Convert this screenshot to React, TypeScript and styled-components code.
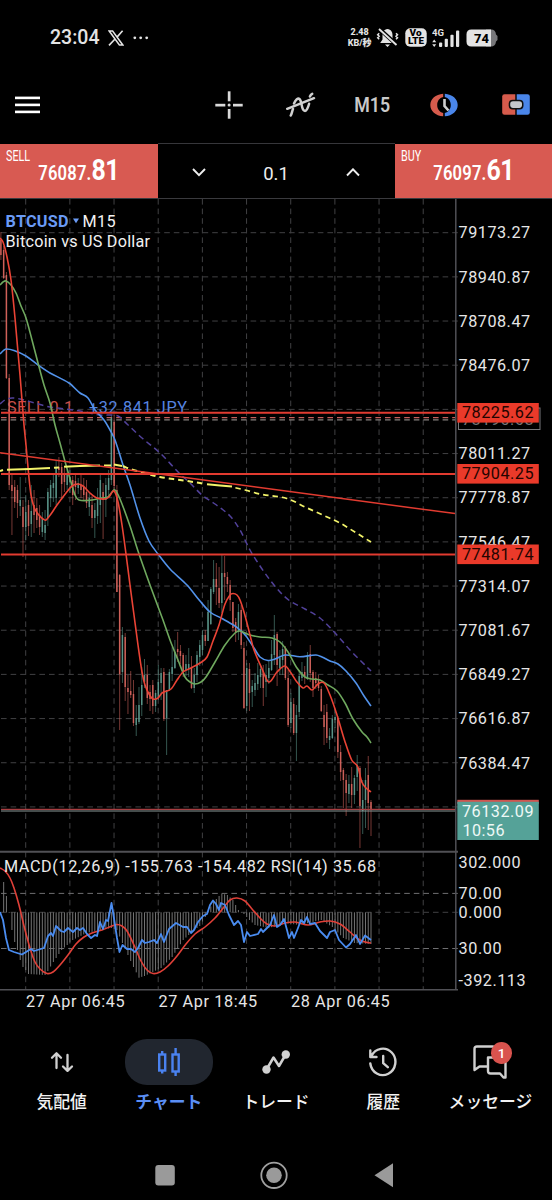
import React from 'react';
import styled, { createGlobalStyle } from 'styled-components';

const GlobalStyle = createGlobalStyle`
  * { box-sizing: border-box; }
  body { margin: 0; background: #000; }
`;

const Screen = styled.div`
  width: 552px;
  height: 1200px;
  display: flex;
  flex-direction: column;
  overflow: hidden;
  background: #000;
  color: #eee;
  font-family: Roboto, 'Noto Sans CJK JP', sans-serif;
`;

/* ---------- status bar ---------- */

const StatusBar = styled.header`
  height: 75px;
  padding: 0 53px 0 50px;
  display: flex;
  align-items: center;
  justify-content: space-between;
  color: #e4e4e4;
`;

const StatusGroup = styled.div<{ $gap: number }>`
  display: flex;
  align-items: center;
  gap: ${(p) => p.$gap}px;
`;

const Clock = styled.span`
  font-size: 19.5px;
  font-weight: 500;
  line-height: 22px;
`;

const NetSpeed = styled.div`
  width: 24px;
  margin-right: -1px;
  font-size: 9px;
  font-weight: 800;
  line-height: 11px;
  text-align: center;
  white-space: nowrap;
  display: flex;
  flex-direction: column;
  align-items: center;
`;

/* ---------- toolbar ---------- */

const Toolbar = styled.div`
  height: 68px;
  padding: 0 22px 9px 15px;
  display: flex;
  align-items: center;
  justify-content: space-between;
`;

const ToolGroup = styled.div`
  display: grid;
  grid-template-columns: repeat(5, 71.8px);
  width: 359px;
  margin-right: -22px;
  justify-items: center;
  align-items: center;
`;

const Timeframe = styled.span`
  font-size: 20px;
  font-weight: 600;
  line-height: 24px;
  color: #c9c9c9;
  transform: scaleX(0.89);
`;

/* ---------- one-click trading ---------- */

const TradePanel = styled.div`
  height: 56px;
  display: grid;
  grid-template-columns: 157.5px 1fr 157.5px;
  border-bottom: 1px solid #3a3a3e;
`;

const DealButton = styled.div`
  position: relative;
  margin-top: 1px;
  background: #d85a52;
  color: #fff;
  display: flex;
  justify-content: center;
  align-items: flex-end;
  padding-bottom: 13px;
`;

const DealSide = styled.span`
  position: absolute;
  left: 6px;
  top: 5px;
  font-size: 14px;
  line-height: 15px;
  transform: scaleX(0.77);
  transform-origin: left;
`;

const DealPrice = styled.span`
  display: flex;
  align-items: baseline;
  font-size: 20px;
  font-weight: 600;
  line-height: 30px;
  height: 30px;
  transform: scaleX(0.83);
  letter-spacing: 0.2px;
  white-space: nowrap;
  b {
    font-size: 30px;
    font-weight: 700;
    letter-spacing: -0.5px;
  }
`;

const Volume = styled.div`
  border-top: 1px solid #36363a;
  display: grid;
  grid-template-columns: 1fr 70px 1fr;
  align-items: center;
  justify-items: center;
  padding-top: 3px;
  font-size: 18.5px;
`;

const VolumeValue = styled.span`
  padding-top: 2px;
`;

/* ---------- chart ---------- */

const Chart = styled.svg`
  display: block;
  flex: none;
  text {
    font-family: Roboto, sans-serif;
    font-size: 16.2px;
  }
`;

const priceLabels: [string, number][] = [
  ['79173.27', 232.7], ['78940.87', 276.9], ['78708.47', 321.1], ['78476.07', 365.2],
  ['78011.27', 453.6], ['77778.87', 497.7], ['77546.47', 541.9], ['77314.07', 586.1],
  ['77081.67', 630.3], ['76849.27', 674.4], ['76616.87', 718.6], ['76384.47', 762.8],
];
const gridY = Array.from({ length: 14 }, (_, i) => 232.7 + i * 44.17);
const gridX = Array.from({ length: 10 }, (_, i) => 25.7 + i * 44.17);

// One entry per bar: high, body top, body bottom, low; a leading "u" marks a rising bar.
const candleData = `d232 240 255 260|d246 250 278 279|d272 275 378 379|d374 378 485 490|d475 485 491 535|d480 487 502 508|d485 490 503 518|u477 500 506 516|
d500 507 527 557|u495 512 527 540|d500 505 526 536|u485 511 524 537|d490 505 515 533|d498 508 520 528|d505 515 527 535|u512 518 532 537|
u510 525 533 540|u488 492 518 526|u480 485 498 507|u475 483 488 502|u460 468 498 505|d457 467 470 477|d463 467 484 500|d468 475 482 492|
u470 475 485 490|u470 477 482 493|d476 480 495 505|d473 481 487 500|u478 483 488 494|d475 485 490 498|d478 487 495 500|d480 492 503 508|
u492 498 507 516|d496 505 518 528|u503 510 518 538|u488 500 516 524|u473 480 505 523|d483 492 500 539|u478 485 500 517|u470 478 490 498|
u415 418 480 485|d415 422 486 491|d485 490 592 592|d574 575 674 730|u627 635 672 683|d633 637 687 701|d675 688 692 714|d671 691 695 698|
d680 694 723 726|u705 718 725 736|u687 705 722 724|u667 685 705 716|u659 675 682 688|d665 675 698 704|d685 692 699 711|d680 685 706 714|
u690 693 706 712|u665 682 697 700|u668 673 683 700|d668 672 719 721|u690 690 718 755|u669 672 690 691|u647 667 674 681|u640 652 668 669|
d632 649 652 662|d645 651 656 664|d653 655 672 677|u655 664 670 676|u648 664 669 677|d656 668 688 689|u668 675 688 693|u651 655 675 682|
u640 645 657 666|u630 635 650 655|d630 635 641 646|u600 612 641 641|u587 589 624 625|u560 579 592 594|d563 579 587 605|d567 588 603 608|
u554 573 603 613|d556 573 577 600|d572 577 584 592|d580 585 600 611|d602 602 628 632|d618 622 632 642|u604 612 632 640|d605 610 645 649|
d642 648 708 709|u663 668 706 711|d663 669 693 711|u680 686 692 707|u673 683 690 696|u663 675 684 690|u665 669 677 688|d665 671 688 706|
u664 675 682 697|u660 668 678 684|u640 654 670 671|u615 635 655 665|d632 634 665 686|u650 658 668 675|u641 649 660 675|d646 648 678 680|
d670 678 725 727|u693 702 723 728|d698 704 733 735|u705 715 733 761|u670 676 712 717|u662 672 678 681|d666 672 676 684|u652 655 678 680|
d645 654 673 682|d670 672 688 697|d672 678 683 689|d675 679 688 691|d686 689 711 712|d705 715 727 745|d704 712 738 743|u728 736 740 749|
u715 719 738 739|u709 717 720 728|d716 718 752 758|d745 752 772 781|d768 770 780 808|d774 780 793 816|u775 784 794 803|d767 784 795 808|
u775 778 795 804|u755 765 777 791|d766 768 806 848|u780 800 811 834|u768 780 800 828|d756 775 803 830|d800 802 810 836`;
const candles = candleData.split('|').map((entry) => {
  const s = entry.trim();
  const [high, top, bottom, low] = s.slice(1).split(' ').map(Number);
  return { up: s[0] === 'u', high, top, bottom, low };
});
const barX = (i: number) => 371 - 2.762 * (134 - i);

// Smooth curve through a list of points (Catmull-Rom turned into cubic segments).
const smooth = (points: string) => {
  const p = points.split(' ').map((s) => s.split(',').map(Number));
  let d = `M${p[0][0]} ${p[0][1]}`;
  for (let i = 0; i < p.length - 1; i++) {
    const a = p[Math.max(0, i - 1)];
    const b = p[i];
    const c = p[i + 1];
    const e = p[Math.min(p.length - 1, i + 2)];
    const step = (c[0] - b[0]) / 3;
    const slope = (l: number[], r: number[]) => (r[1] - l[1]) / (r[0] - l[0]);
    d += `C${b[0] + step} ${b[1] + slope(a, c) * step} ${c[0] - step} ${c[1] - slope(b, e) * step} ${c[0]} ${c[1]}`;
  }
  return d;
};

const fastMa = '0,238 3,242 7,257 11,280 15,318 20,375 24,425 26,445 29,478 31,495 34,507 38,514 43,519 46,520 51,514 57,505 66,493 72,486 78,484 83,486 90,493 97,498 105,499 109,497 114,491 118,502 122,525 126,554 130,585 134,615 138,645 142,672 145,685 149,694 153,699 158,698 162,693 171,689 177,680 183,672 191,668 200,663 207,657 213,641 219,625 225,604 230,595 233,593.5 237,595 240,600 244,612 248,627 251,639 254,650 261.7,668 268.7,682 277,672 285,666 291,673 296.7,681.7 303,688 307,686 312,690 318,684 324,683 330,695 337,715 345,741.7 351.7,760 357.7,766.7 361.7,781.7 366,788 371,792';
const midMa = '0,285 3,282 6,281 11,285 16,293 21,306 26,318 32,340 38,363 44,385 50,403 55,425 60,443 66,465 71,482 75,495 79,500 92,500 102,498 108,497 112,492 115,490 120,499 130,526 138,551 150,585 163,620 170,640 178,660 185,677 190,682 195,684 201,682 206,677 215,662 225,645 235,633 240,631 250,635 260,637 272,638 280,642 288,652 297,668 305,677 312,679 320,680 328,685 337,691 345,703 353,719 362,732 367,737 371,743';
const slowMa = '0,354 3,351 6,349 14,350.5 26,356 38,365 50,373 69,383 80,393 88,398 95,410 104,420 110,430 115,440 123,465 130,485 140,518 149,541 158,554 170,569 187,585 200,601 210,612 221,618 235,626 240,630 246,636 254,648 260,657 268,660.5 275,659 285,655 300,656.7 316,655 322,657 330,661 338,664 346,671 356,683 364,696 371,706';
const longMa = '0,404 5,400 12,398 20,399 35,403 50,407 80,411 100,415 118,416 127,424 142,438 160,453 180,474 190,483 202,495 215,504 230,516 240,530 250,550 260,566 270,580 280,592 290,601 305,609 320,618 336,634 350,650 371,671';
const yellowDashed = '123,466 130,469 145,473 160,477 180,480 200,483 206,484.3';
const yellowTail = '232,487 245,490 260,494 287,498.5 305,507 325,516 340,523 350,529 371,542';

// MACD histogram ends, interpolated between bars.
const macdKeys: [number, number][] = [[0, 868], [1, 882], [2, 896], [3, 913], [4, 930], [5, 942], [6, 950], [7, 960], [8, 967], [9, 970], [10, 974], [16, 975], [17, 971], [19, 962], [22, 950], [26, 940], [31, 933], [40, 928], [42, 930], [44, 943], [46, 955], [48, 967], [50, 977.7], [52, 976], [58, 968], [62, 957], [66, 940], [70, 930], [72, 926], [74, 917], [75, 911], [77, 902], [79, 896], [80, 893.5], [82, 895], [84, 900], [86, 910], [88, 914], [90, 920], [92, 925], [97, 928], [103, 923], [108, 925], [116, 920], [120, 927], [124, 938], [128, 943], [134, 944]];
const macdEnd = (i: number) => {
  const k = Math.max(1, macdKeys.findIndex(([n]) => n >= i));
  const [a, ya] = macdKeys[k - 1];
  const [b, yb] = macdKeys[k];
  return ya + ((yb - ya) * (i - a)) / (b - a);
};
const signalLine = '0,868 5,871 10,878 14,888 19,905 24,926 30,948 35,962 40,969 47,973.5 53,972 60,965 68,955 76,944 84,937 92,933 102,930 112,926 117,924.5 122,926 127,931 134,945 141,961 147,970 153,973.5 160,972 168,966 177,956 186,944 195,934 205,927 215,918 224,907 230,900 237,898 245,901 252,909 260,918 267,924 275,926 285,923 295,922 308,925 320,922 330,921 340,924 350,932 358,939 365,942 371,943';
const rsiLine = '0,912 3,920 6,938 9,950 14,952 22,954.5 26,952 31,949 34,951 44,948 48,936 51,933 53,936 56,926 61,931 64,932 68,928 73,932 77,928 80,930 83,928 87,934 91,938 95,935 97,936 100,922 103,929 106,920 108,921 111.5,903 113,912 117,938 119.5,952 122.5,945 127,949 131,949 135,952 138,948 142,940 145,943 149,942 154,940 157,943 161,934 164,942 169,929 176,923 183,927 187,927 191,933 194,930 198,922 203,916 207,914 210,905 213,900.5 216,904 219,910 221,903 225,905 229,915 234,925 238,921 241,925 244,942 247,932 250,936 258,934 261,929 263,932 270,925 274,915 277,927 280,925 284,919 287,930 289,938 292,932 294,938 298,928 301,920 304,923 307,917 310,924 315,923 320,931 327,938 330,932 335,930 339,940 346,947.5 350,944 356,935 360,944 365,935.5 371,940';

function PriceTag({ y, text }: { y: number; text: string }) {
  return (
    <g>
      <rect x={457.3} y={y - 10} width={81.5} height={19.6} fill="#ea3a2a" />
      <text x={462} y={y + 5.4} fill="#240400" textLength={71.5}>{text}</text>
    </g>
  );
}

function PriceChart() {
  return (
    <Chart width="552" height="821" viewBox="0 199 552 821">
      <g stroke="#404043" strokeWidth="1" strokeDasharray="5.6 4">
        {gridX.map((x) => <line key={x} x1={x} x2={x} y1={199} y2={990} />)}
        {gridY.map((y) => <line key={y} x1={1} x2={459} y1={y} y2={y} />)}
        <line x1={1} x2={459} y1={912.3} y2={912.3} />
        <line x1={1} x2={459} y1={893.4} y2={893.4} stroke="#6e6e70" />
        <line x1={1} x2={459} y1={948.5} y2={948.5} stroke="#6e6e70" />
      </g>

      <line x1={1} x2={455} y1={417.6} y2={417.6} stroke="#c4605c" strokeWidth="1.4" strokeDasharray="5.6 4" />
      <line x1={1} x2={455} y1={419.8} y2={419.8} stroke="#85807e" strokeWidth="1.3" strokeDasharray="5.6 4" />
      <text x={7} y={412.5} fill="#c9504a" textLength={66}>SELL 0.1</text>
      <text x={89} y={412.5} fill="#5785e0" textLength={98}>+32 841 JPY</text>

      {candles.map((c, i) => (
        <g key={i} fill={c.up ? '#5f9c90' : '#d9665e'}>
          <rect x={barX(i) - 0.5} y={c.high} width={1} height={c.low - c.high} opacity={0.55} />
          <rect x={barX(i) - 0.75} y={c.top} width={1.5} height={Math.max(1, c.bottom - c.top)} opacity={0.9} />
        </g>
      ))}

      <line x1={1} x2={455} y1={809.4} y2={809.4} stroke="#a83f42" strokeWidth="1.2" />
      <line x1={1} x2={455} y1={811} y2={811} stroke="#8b9a98" strokeWidth="1.2" />

      <g fill="none" strokeWidth="1.6" strokeLinejoin="round">
        <path d={smooth(longMa)} stroke="#51419a" strokeDasharray="6 4" strokeWidth="1.5" />
        <path d={smooth(slowMa)} stroke="#5292ea" />
        <path d={smooth(midMa)} stroke="#6fa85e" />
        <path d={smooth(fastMa)} stroke="#ea4335" />
        <g stroke="#f2f36a" strokeWidth="2">
          <polyline points="0,471 3,470" />
          <polyline points="7,469.7 30,469 50,468" />
          <polyline points="54,467.8 59,467.4" />
          <polyline points="64,466.8 80,466 100,465.6" />
          <polyline points="104,465.5 111,465.4" />
          <polyline points="114,464.6 122,466" />
          <path d={smooth(yellowDashed)} strokeDasharray="5.5 4" />
          <polyline points="207,484.3 220,485.5 232,486.5" />
          <path d={smooth(yellowTail)} strokeDasharray="5.5 4" strokeDashoffset="6" strokeWidth="1.7" />
        </g>
      </g>

      <g stroke="#e23b30" strokeWidth="1.9">
        <line x1={0} x2={455} y1={452.8} y2={513.6} strokeWidth="1.5" />
        <line x1={1} x2={455} y1={412.8} y2={412.8} />
        <line x1={1} x2={455} y1={474} y2={474} />
        <line x1={1} x2={455} y1={554.5} y2={554.5} />
      </g>

      {candles.map((_, i) => {
        const end = macdEnd(i);
        return i > 0 && (
          <rect key={i} x={barX(i) - 0.5} y={Math.min(912.3, end)} width={1} height={Math.abs(end - 912.3)} fill="#747474" />
        );
      })}
      <g fill="none" strokeWidth="1.6" strokeLinejoin="round">
        <path d={smooth(signalLine)} stroke="#e04038" />
        <polyline points={rsiLine} stroke="#4a8cf0" strokeWidth="1.8" />
      </g>

      <g stroke="#505055" strokeWidth="1.5">
        <line x1={455.8} x2={455.8} y1={199} y2={990} />
        <line x1={0} x2={458} y1={851.7} y2={851.7} strokeWidth="2" />
        <line x1={0} x2={458} y1={989.8} y2={989.8} />
      </g>

      <text x={5.5} y={226.5} fill="#6a9bf5" fontWeight="700" textLength={63}>BTCUSD</text>
      <path d="M73 218.500h6l-3 4.800z" fill="#6a9bf5" />
      <text x={82.5} y={226.5} fill="#f2f2f2" textLength={33}>M15</text>
      <text x={5.5} y={246.7} fill="#f2f2f2" textLength={144.5}>Bitcoin vs US Dollar</text>
      <text x={4} y={871.7} fill="#eaeaea" textLength={372}>MACD(12,26,9) -155.763 -154.482 RSI(14) 35.68</text>

      <g fill="#e6e6e6">
        {priceLabels.map(([label, y]) => (
          <text key={label} x={458.6} y={y + 5.7} textLength={71.5}>{label}</text>
        ))}
        <text x={458.6} y={867.5} textLength={62}>302.000</text>
        <text x={458.6} y={899} textLength={43}>70.00</text>
        <text x={458.6} y={918} textLength={43}>0.000</text>
        <text x={458.6} y={954.3} textLength={43}>30.00</text>
        <text x={458.6} y={986} textLength={67}>-392.113</text>
        <text x={26} y={1007.3} textLength={98.5}>27 Apr 06:45</text>
        <text x={158.5} y={1007.3} textLength={98.5}>27 Apr 18:45</text>
        <text x={291} y={1007.3} textLength={98.5}>28 Apr 06:45</text>
      </g>

      <rect x={458.5} y={408} width={81.5} height={21.5} fill="#000" stroke="#77777a" />
      <text x={462} y={425} fill="#77777a" textLength={71.5}>78190.68</text>
      <PriceTag y={413} text="78225.62" />
      <PriceTag y={474} text="77904.25" />
      <PriceTag y={554.5} text="77481.74" />

      <rect x={457.3} y={799.8} width={81.5} height={4} fill="#cf5550" />
      <rect x={457.3} y={801.8} width={81.5} height={38.2} fill="#55a298" />
      <text x={462} y={817.2} fill="#eef8f6" textLength={71.5}>76132.09</text>
      <text x={462.5} y={836} fill="#eef8f6" textLength={42}>10:56</text>
    </Chart>
  );
}

/* ---------- bottom navigation ---------- */

const BottomNav = styled.nav`
  height: 110px;
  padding: 19px 8px 0;
  display: grid;
  grid-template-columns: repeat(5, 1fr);
`;

const NavItem = styled.div<{ $active?: boolean }>`
  display: flex;
  flex-direction: column;
  align-items: center;
  gap: 4px;
  color: ${(p) => (p.$active ? '#5b8ff5' : '#f2f2f2')};
  font-family: 'Noto Sans CJK JP', sans-serif;
  font-size: 16.8px;
  font-weight: ${(p) => (p.$active ? 700 : 500)};
  line-height: 24px;
  white-space: nowrap;
`;

const IconPill = styled.div<{ $active?: boolean }>`
  position: relative;
  width: 88px;
  height: 46px;
  border-radius: 22px;
  display: flex;
  align-items: center;
  justify-content: center;
  background: ${(p) => (p.$active ? '#21262f' : 'transparent')};
`;

const Badge = styled.span`
  position: absolute;
  left: 44.5px;
  top: 3px;
  width: 21.5px;
  height: 22px;
  border-radius: 50%;
  background: #d9534e;
  color: #fff;
  font: 500 13.5px/22px Roboto, sans-serif;
  text-align: center;
`;

const SystemNav = styled.footer`
  height: 70px;
  padding: 31px 158.5px 0 154.5px;
  display: flex;
  justify-content: space-between;
`;

export default function App() {
  return (
    <>
      <GlobalStyle />
      <Screen>
        <StatusBar>
          <StatusGroup $gap={8.5}>
            <Clock>23:04</Clock>
            <svg width="16" height="16" viewBox="0 0 16 16" fill="none" stroke="#e4e4e4">
              <path d="M1.200 1h3.400l10.200 14h-3.400z" strokeWidth="1.500" />
              <path d="M14.600.800L9 7.100M6.800 9.200L1 15.400" strokeWidth="1.600" />
            </svg>
            <svg width="18" height="4" viewBox="0 0 18 4" fill="#e4e4e4">
              <circle cx="2.800" cy="1.800" r="1.400" /><circle cx="8.700" cy="1.800" r="1.400" /><circle cx="14.700" cy="1.800" r="1.400" />
            </svg>
          </StatusGroup>
          <StatusGroup $gap={5.6}>
            <NetSpeed><span>2.48</span><span>KB/秒</span></NetSpeed>
            <svg width="23" height="20" viewBox="0 0 23 20">
              <path d="M11.500 1c-3.500.500-5 3-5 6v4.500L4.200 15h14.600l-2.300-3.500V7c0-3-1.500-5.500-5-6zM9 16.500h5l-2.500 2.500z" fill="#e4e4e4" />
              <path d="M4 1.500L21 17" stroke="#000" strokeWidth="4" />
              <path d="M3 1L20.500 17" stroke="#e4e4e4" strokeWidth="1.900" />
              <path d="M3.200 5.200l-1.500 1.500 1.500 1.500-1.500 1.500 1.500 1.500M20 5.200l1.500 1.500-1.500 1.500 1.500 1.500-1.500 1.500" stroke="#e4e4e4" strokeWidth="1.500" fill="none" />
            </svg>
            <svg width="22" height="19" viewBox="0 0 22 19">
              <rect x="0.300" y="0.300" width="21.400" height="18.400" rx="5" fill="#e4e4e4" />
              <g fill="#000" fontFamily="Roboto, sans-serif" fontWeight="900" fontSize="8.800">
                <text x="4.500" y="8.300" textLength="12" lengthAdjust="spacingAndGlyphs">Vo</text>
                <text x="3" y="16.300" textLength="16" lengthAdjust="spacingAndGlyphs">LTE</text>
              </g>
            </svg>
            <svg width="28" height="20" viewBox="0 0 28 20" fill="#e4e4e4">
              <text x="0" y="7.600" fontFamily="Roboto, sans-serif" fontWeight="700" fontSize="9" textLength="12" lengthAdjust="spacingAndGlyphs">4G</text>
              <path d="M0.200 14.200l2-2.700 2 2.700zM0.200 16.200h4l-2 2.700z" />
              <rect x="7" y="14.500" width="3.200" height="4.500" rx="1" />
              <rect x="12.700" y="10.800" width="3.200" height="8.200" rx="1" />
              <rect x="18.400" y="6.700" width="3.200" height="12.300" rx="1" />
              <rect x="24" y="2.500" width="3.200" height="16.500" rx="1" />
            </svg>
            <svg width="33" height="18" viewBox="0 0 33 18">
              <path d="M20 .500h5q4.500 0 5 5l1.500 1.500v4l-1.500 1.500q-.500 5-5 5h-5z" fill="#77777a" />
              <path d="M5.500.500H25v17H5.500q-5 0-5-5v-7q0-5 5-5z" fill="#e4e4e4" />
              <text x="8" y="13.900" fill="#000" fontFamily="Roboto, sans-serif" fontWeight="800" fontSize="13.500" textLength="15" lengthAdjust="spacingAndGlyphs">74</text>
            </svg>
          </StatusGroup>
        </StatusBar>

        <Toolbar>
          <svg width="25" height="18" viewBox="0 0 25 18" fill="#fff">
            <rect width="25" height="2.600" y="0.600" /><rect width="25" height="2.600" y="7.600" /><rect width="25" height="2.600" y="14.600" />
          </svg>
          <ToolGroup>
            <svg width="28" height="28" viewBox="0 0 28 28" fill="#d9d9d9">
              <rect x="12.800" y="0.300" width="2.700" height="10" /><rect x="12.800" y="18" width="2.700" height="9.700" />
              <rect x="0.300" y="12.800" width="10" height="2.700" /><rect x="18" y="12.800" width="9.700" height="2.700" />
              <circle cx="14.100" cy="14.100" r="1.500" />
            </svg>
            <svg width="30" height="26" viewBox="0 0 30 26" fill="none" stroke="#d0d0d0" strokeWidth="2.500" strokeLinecap="round">
              <path d="M1.200 16.800L28 6.200" />
              <path d="M4.700 23.500c1.200-1.500 1.200-4 2.300-6.500" />
              <path d="M8 11.500c1.700-4 4-5.700 5.500-4.500 2.600 2.200 1.700 10.300 4.800 11.700 2.200 1 3.800-3.200 4.800-7" />
              <path d="M23.900 4.500q.800-2 2.300-2.700" />
            </svg>
            <Timeframe>M15</Timeframe>
            <svg width="28" height="24" viewBox="0 0 28 24" fill="none">
              <path d="M13.200.700v3.300c-3.800.800-6 4.200-6 8s2.200 7.200 6 8v3.300C5.500 22.800.300 18 .300 12S5.500 1.200 13.200.700z" fill="#d65b4c" />
              <path d="M14.800.700v3.300c3.800.800 6 4.200 6 8s-2.200 7.200-6 8v3.300c7.700-.500 12.900-5.300 12.900-11.300S22.500 1.200 14.800.700z" fill="#4a86ea" />
              <path d="M14.500 6v7l4 4.500" stroke="#cfcfcf" strokeWidth="2.600" />
            </svg>
            <svg width="28" height="21" viewBox="0 0 28 21">
              <path d="M2.500.200H13.300v20.600H2.500Q.200 20.800.200 18.500V2.500Q.200.200 2.500.200z" fill="#d65b4c" />
              <path d="M14.700.200h10.800q2.300 0 2.300 2.300v16q0 2.300-2.300 2.300H14.700z" fill="#4a86ea" />
              <rect x="6.700" y="5.800" width="14.800" height="9.600" rx="4" fill="#101010" />
              <rect x="8.200" y="7.300" width="11.800" height="6.600" rx="2.800" fill="#c4c7cc" />
            </svg>
          </ToolGroup>
        </Toolbar>

        <TradePanel>
          <DealButton>
            <DealSide>SELL</DealSide>
            <DealPrice>76087.<b>81</b></DealPrice>
          </DealButton>
          <Volume>
            <svg width="14" height="9" viewBox="0 0 14 9" fill="none" stroke="#eee" strokeWidth="1.900"><path d="M1 1l6 6.200L13 1" /></svg>
            <VolumeValue>0.1</VolumeValue>
            <svg width="14" height="9" viewBox="0 0 14 9" fill="none" stroke="#eee" strokeWidth="1.900"><path d="M1 7.500l6-6.200 6 6.200" /></svg>
          </Volume>
          <DealButton>
            <DealSide>BUY</DealSide>
            <DealPrice>76097.<b>61</b></DealPrice>
          </DealButton>
        </TradePanel>

        <PriceChart />

        <BottomNav>
          <NavItem>
            <IconPill>
              <svg width="24" height="22" viewBox="0 0 24 22" fill="none" stroke="#d0d0d0" strokeWidth="2.300" strokeLinecap="round" strokeLinejoin="round">
                <path d="M6.500 17V2.500M2 6.800l4.500-4.500L11 6.800M17.500 4v15M13 15.500l4.500 4.300 4.500-4.300" />
              </svg>
            </IconPill>
            気配値
          </NavItem>
          <NavItem $active>
            <IconPill $active>
              <svg width="24" height="28" viewBox="0 0 24 28" fill="none" stroke="#4a82f0" strokeWidth="2.400">
                <rect x="2.200" y="6.500" width="6" height="16" /><path d="M5.200 3v3.500M5.200 22.500v3" />
                <rect x="15.500" y="6.500" width="6.200" height="17" /><path d="M18.600 0v6.500M18.600 23.500V28" />
              </svg>
            </IconPill>
            チャート
          </NavItem>
          <NavItem>
            <IconPill>
              <svg width="28" height="25" viewBox="0 0 28 25" fill="none" stroke="#d0d0d0" strokeWidth="2.500" strokeLinejoin="round">
                <path d="M4.500 19.500l7-12 5.500 8.500 7-12" />
                <circle cx="4.500" cy="19.500" r="4.200" fill="#d0d0d0" stroke="none" /><circle cx="23.800" cy="4.500" r="4.200" fill="#d0d0d0" stroke="none" />
              </svg>
            </IconPill>
            トレード
          </NavItem>
          <NavItem>
            <IconPill>
              <svg width="30" height="30" viewBox="0 0 30 30" fill="none" stroke="#d0d0d0" strokeWidth="2.400" strokeLinecap="round" strokeLinejoin="round">
                <path d="M3.500 9A12.600 13.200 0 1 1 2.300 16.500M2.300 3.500V10H8.500M15.200 9v7.200l4.600 4" />
              </svg>
            </IconPill>
            履歴
          </NavItem>
          <NavItem>
            <IconPill>
              <svg width="36" height="34" viewBox="0 0 36 34" fill="none" stroke="#d0d0d0" strokeWidth="2.400" strokeLinejoin="round">
                <path d="M15 21.500H7.500L2.500 25V4Q2.500 1.500 5 1.500H20.500q2.500 0 2.500 2.500V12" />
                <path d="M16 12.500h16q1.500 0 1.500 2v18h-2l-3.500-4H18.500q-2.500 0-2.500-2.500V12.500z" />
              </svg>
              <Badge>1</Badge>
            </IconPill>
            メッセージ
          </NavItem>
        </BottomNav>

        <SystemNav>
          <svg width="20" height="29" viewBox="0 0 20 29" fill="#9a9a9a"><rect x="0.300" y="4" width="19.500" height="20.500" rx="3" /></svg>
          <svg width="28" height="29" viewBox="0 0 28 29" fill="none"><circle cx="14" cy="14.300" r="12.700" stroke="#a0a0a0" strokeWidth="1.800" /><circle cx="14" cy="14.300" r="7.800" fill="#9a9a9a" /></svg>
          <svg width="20" height="29" viewBox="0 0 20 29" fill="#9a9a9a"><path d="M0.500 14.300L19 2.300v24z" /></svg>
        </SystemNav>
      </Screen>
    </>
  );
}
